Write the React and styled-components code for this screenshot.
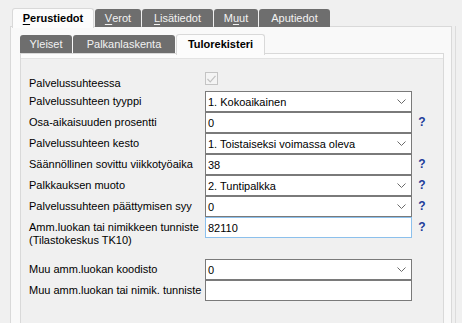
import React from 'react';
import styled, { createGlobalStyle } from 'styled-components';

const Global = createGlobalStyle`
  html, body { margin: 0; padding: 0; background: #f0f0f0; }
  body {
    font-family: "Liberation Sans", Arial, sans-serif;
    font-size: 11px;
    color: #000;
    overflow: hidden;
  }
`;

const Screen = styled.div`
  width: 462px;
  height: 323px;
  overflow: hidden;
  box-sizing: border-box;
  padding: 8px 0 0 10px;
`;

const TabStrip = styled.div`
  display: flex;
  align-items: flex-start;
  height: ${p => p.$h}px;
  padding-left: ${p => p.$pl}px;
  position: relative;
  z-index: 2;
`;

const Tab = styled.div`
  box-sizing: border-box;
  width: ${p => p.$w}px;
  height: ${p => (p.$active ? p.$h + 2 : p.$h)}px;
  margin-top: ${p => (p.$active ? 0 : 1)}px;
  margin-right: 1px;
  border-radius: 3px 3px 0 0;
  display: flex;
  align-items: center;
  justify-content: center;
  padding-bottom: ${p => (p.$active ? 2 : 0)}px;
  background: ${p => (p.$active ? '#fcfcfc' : '#6e6e6e')};
  color: ${p => (p.$active ? '#000' : '#f2f2f2')};
  font-weight: ${p => (p.$active ? 700 : 400)};
  border: ${p => (p.$active ? '1px solid #d9d9d9' : 'none')};
  border-bottom: none;
  white-space: nowrap;
  u { text-decoration: underline; text-underline-offset: 2px; }
`;

const OuterPage = styled.div`
  box-sizing: border-box;
  width: 442px;
  height: 300px;
  margin-top: -1px;
  border: 1px solid #d9d9d9;
  background: #f9f9f9;
  padding: 7px 0 0 9px;
  box-shadow: 3px 0 0 #f0f0f0, 4px 0 0 #dcdcdc;
`;

const InnerPage = styled.div`
  box-sizing: border-box;
  width: 424px;
  height: 280px;
  margin-top: -1px;
  border: 1px solid #d9d9d9;
  background: #fcfcfc;
  padding-top: 4px;
`;

const FormPanel = styled.div`
  box-sizing: border-box;
  height: 100%;
  background: #f0f0f0;
  border-top: 1px solid #e3e3e3;
  padding: 11px 0 0 8px;
`;

const Row = styled.div`
  display: grid;
  grid-template-columns: 176px 207px 18px;
  height: 21px;
  margin-top: ${p => p.$gap || 0}px;
`;

const Label = styled.div`
  padding-top: ${p => p.$top ?? 4}px;
  line-height: 13px;
  white-space: nowrap;
`;

const Box = styled.div`
  box-sizing: border-box;
  height: 21px;
  border: 1px solid ${p => (p.$focus ? '#8cc0ec' : '#7a7a7a')};
  background: #fff;
  display: flex;
  align-items: center;
  justify-content: space-between;
  padding: 0 5px 0 2px;
`;

const Help = styled.div`
  color: #1e3c9a;
  font-weight: 700;
  font-size: 12px;
  text-align: center;
  padding-top: 3px;
  padding-left: 2px;
`;

const Check = styled.div`
  box-sizing: border-box;
  width: 13px;
  height: 13px;
  margin-top: 2px;
  border: 1px solid #c4c4c4;
  background: #f4f4f4;
  display: flex;
  align-items: center;
  justify-content: center;
`;

const Chevron = () => (
  <svg width="9" height="5" viewBox="0 0 9 5">
    <path d="M0.5 0.5 L4.5 4.5 L8.5 0.5" fill="none" stroke="#6a6a6a" strokeWidth="1" />
  </svg>
);

const Field = ({ value, select, focus }) => (
  <Box $focus={focus}>
    <span>{value}</span>
    {select && <Chevron />}
  </Box>
);

export default function App() {
  return (
    <Screen>
      <Global />
      <TabStrip $h={19} $pl={2}>
        <Tab $active $h={18} $w={82}><u>P</u>erustiedot</Tab>
        <Tab $h={18} $w={46}><u>V</u>erot</Tab>
        <Tab $h={18} $w={71}><u>L</u>isätiedot</Tab>
        <Tab $h={18} $w={44}>M<u>u</u>ut</Tab>
        <Tab $h={18} $w={71}>Aputiedot</Tab>
      </TabStrip>
      <OuterPage>
        <TabStrip $h={20} $pl={0}>
          <Tab $h={18} $w={52}>Yleiset</Tab>
          <Tab $h={18} $w={102}>Palkanlaskenta</Tab>
          <Tab $active $h={19} $w={89}>Tulorekisteri</Tab>
        </TabStrip>
        <InnerPage>
          <FormPanel>
            <Row>
              <Label $top={7}>Palvelussuhteessa</Label>
              <div>
                <Check>
                  <svg width="9" height="8" viewBox="0 0 9 8">
                    <path d="M0.5 4 L3.2 6.8 L8.5 0.8" fill="none" stroke="#c2c2c2" strokeWidth="1.2" />
                  </svg>
                </Check>
              </div>
            </Row>
            <Row>
              <Label>Palvelussuhteen tyyppi</Label>
              <Field value="1. Kokoaikainen" select />
            </Row>
            <Row>
              <Label>Osa-aikaisuuden prosentti</Label>
              <Field value="0" />
              <Help>?</Help>
            </Row>
            <Row>
              <Label>Palvelussuhteen kesto</Label>
              <Field value="1. Toistaiseksi voimassa oleva" select />
            </Row>
            <Row>
              <Label>Säännöllinen sovittu viikkotyöaika</Label>
              <Field value="38" />
              <Help>?</Help>
            </Row>
            <Row>
              <Label>Palkkauksen muoto</Label>
              <Field value="2. Tuntipalkka" select />
              <Help>?</Help>
            </Row>
            <Row>
              <Label>Palvelussuhteen päättymisen syy</Label>
              <Field value="0" select />
              <Help>?</Help>
            </Row>
            <Row>
              <Label>Amm.luokan tai nimikkeen tunniste<br />(Tilastokeskus TK10)</Label>
              <Field value="82110" focus />
              <Help>?</Help>
            </Row>
            <Row $gap={21}>
              <Label>Muu amm.luokan koodisto</Label>
              <Field value="0" select />
            </Row>
            <Row>
              <Label>Muu amm.luokan tai nimik. tunniste</Label>
              <Field value="" />
            </Row>
          </FormPanel>
        </InnerPage>
      </OuterPage>
    </Screen>
  );
}
